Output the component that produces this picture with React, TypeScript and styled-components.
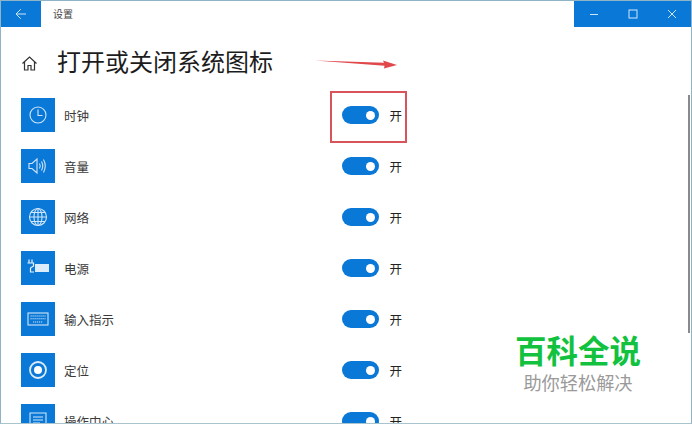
import React from "react";
import styled, { createGlobalStyle } from "styled-components";

const Global = createGlobalStyle`
  html, body { margin: 0; padding: 0; background: #fff; overflow: hidden; }
  #root { width: 692px; height: 424px; }
`;

const FONT = `"Noto Sans CJK SC", "Liberation Sans", sans-serif`;

const Win = styled.div`
  position: relative;
  width: 692px;
  height: 424px;
  box-sizing: border-box;
  border: 1px solid #8fb4c8;
  border-bottom: 1px solid #a9c4cf;
  background: #fff;
  overflow: hidden;
  font-family: ${FONT};
  color: #222;
`;
const TitleBar = styled.div`
  display: flex;
  align-items: stretch;
  height: 26px;
`;
const BackBtn = styled.div`
  width: 40px;
  background: #0a78d7;
  display: flex;
  align-items: center;
  justify-content: center;
`;
const TitleText = styled.div`
  margin-left: 12px;
  font-size: 10px;
  line-height: 26px;
  color: #444;
  flex: 1;
`;
const Controls = styled.div`
  display: flex;
  width: 117px;
  background: #0a78d7;
`;
const Ctl = styled.div`
  flex: 1;
  display: flex;
  align-items: center;
  justify-content: center;
`;
const Heading = styled.div`
  display: flex;
  align-items: center;
  height: 36px;
  margin-top: 16px;
  padding-left: 20px;
`;
const HomeWrap = styled.div`
  width: 17px;
  height: 17px;
  margin-right: 19px;
`;
const H1 = styled.h1`
  margin: 0;
  font-size: 24px;
  font-weight: 400;
  line-height: 36px;
  color: #1c1c1c;
`;
const List = styled.div`
  display: flex;
  flex-direction: column;
  gap: 17px;
  margin-top: 19px;
  padding-left: 20px;
`;
const Row = styled.div`
  display: flex;
  align-items: center;
  height: 34px;
  flex: none;
`;
const IconBox = styled.div`
  width: 34px;
  height: 34px;
  background: #0a78d7;
  display: flex;
  align-items: center;
  justify-content: center;
  flex: none;
`;
const Label = styled.div`
  width: 277.5px;
  margin-left: 9px;
  font-size: 12.5px;
  color: #3a3a3a;
  white-space: nowrap;
`;
const Toggle = styled.div`
  position: relative;
  width: 37.5px;
  height: 18px;
  border-radius: 9px;
  background: #0a78d7;
  flex: none;
`;
const Knob = styled.div`
  position: absolute;
  top: 4.5px;
  right: 4px;
  width: 9px;
  height: 9px;
  border-radius: 50%;
  background: #fff;
`;
const OnText = styled.div`
  margin-left: 10.5px;
  font-size: 12.5px;
  color: #222;
`;
const RedBox = styled.div`
  position: absolute;
  left: 329px;
  top: 90px;
  width: 73px;
  height: 48px;
  border: 2px solid #d9545a;
`;
const Arrow = styled.svg`
  position: absolute;
  left: 313px;
  top: 57px;
`;
const Scroll = styled.div`
  position: absolute;
  right: 1px;
  top: 94px;
  width: 2px;
  height: 238px;
  background: #8a8a8a;
`;
const Mark = styled.div`
  position: absolute;
  left: 508px;
  top: 327px;
  width: 138px;
  background: rgba(255, 255, 255, 0.9);
  display: flex;
  flex-direction: column;
  align-items: center;
`;
const MarkTop = styled.div`
  font-size: 31.5px;
  font-weight: 700;
  line-height: 43px;
  color: #12c23f;
  white-space: nowrap;
`;
const MarkSub = styled.div`
  font-size: 18.2px;
  line-height: 22px;
  color: #9a9a9a;
  white-space: nowrap;
`;

const I = { fill: "none", stroke: "#cfe6fa", strokeWidth: 1.1 } as const;

const Clock = () => (
  <svg width="20" height="20" viewBox="0 0 20 20" {...I}>
    <circle cx="10" cy="10" r="8" />
    <path d="M10 4.5V10.5H14.5" />
  </svg>
);
const Speaker = () => (
  <svg width="22" height="20" viewBox="0 0 22 20" {...I}>
    <path d="M2 7.5H5L10 3V17L5 12.5H2Z" />
    <path d="M12.5 7.5Q14 10 12.5 12.5M14.5 5.5Q17 10 14.5 14.5M16.5 3.5Q20 10 16.5 16.5" />
  </svg>
);
const Globe = () => (
  <svg width="20" height="20" viewBox="0 0 20 20" {...I}>
    <circle cx="10" cy="10" r="8.5" />
    <ellipse cx="10" cy="10" rx="4" ry="8.5" />
    <path d="M1.5 10H18.5M3 5.5H17M3 14.5H17M10 1.5V18.5" />
  </svg>
);
const Power = () => (
  <svg width="24" height="18" viewBox="0 0 24 18">
    <rect x="9" y="5" width="14" height="8" fill="#dcecfb" />
    <path d="M3 0.5V4M6 0.5V4M1.5 4H7.5V7L4.5 9V13H8" fill="none" stroke="#e6f2fd" strokeWidth="1.2" />
  </svg>
);
const Keyboard = () => (
  <svg width="22" height="14" viewBox="0 0 22 14" {...I}>
    <rect x="1" y="1" width="20" height="12" />
    <path d="M3.5 4H18.5M3.5 6.8H18.5M6 10H16" strokeDasharray="1.2 0.8" />
  </svg>
);
const Target = () => (
  <svg width="20" height="20" viewBox="0 0 20 20">
    <circle cx="10" cy="10" r="8" fill="none" stroke="#dcecfb" strokeWidth="1.8" />
    <circle cx="10" cy="10" r="4" fill="#fff" />
  </svg>
);
const Action = () => (
  <svg width="20" height="20" viewBox="0 0 20 20" {...I}>
    <path d="M2 2H18V15H2ZM5 6H15M5 9H15M5 12H12" />
  </svg>
);

const rows: [string, React.ReactNode][] = [
  ["时钟", <Clock />],
  ["音量", <Speaker />],
  ["网络", <Globe />],
  ["电源", <Power />],
  ["输入指示", <Keyboard />],
  ["定位", <Target />],
  ["操作中心", <Action />],
];

export default function App() {
  return (
    <Win>
      <Global />
      <TitleBar>
        <BackBtn>
          <svg width="12" height="12" viewBox="0 0 12 12" fill="none" stroke="#cfe6fa" strokeWidth="1">
            <path d="M11 6H1.2M5.8 1.2L1 6L5.8 10.8" />
          </svg>
        </BackBtn>
        <TitleText>设置</TitleText>
        <Controls>
          <Ctl>
            <svg width="10" height="10" viewBox="0 0 10 10" stroke="#cfe6fa" fill="none"><path d="M1 5.5H9" /></svg>
          </Ctl>
          <Ctl>
            <svg width="10" height="10" viewBox="0 0 10 10" stroke="#cfe6fa" fill="none"><rect x="1" y="1" width="8" height="8" /></svg>
          </Ctl>
          <Ctl>
            <svg width="10" height="10" viewBox="0 0 10 10" stroke="#cfe6fa" fill="none"><path d="M1 1L9 9M9 1L1 9" /></svg>
          </Ctl>
        </Controls>
      </TitleBar>
      <Heading>
        <HomeWrap>
          <svg width="17" height="17" viewBox="0 0 17 17" fill="none" stroke="#333" strokeWidth="1.2">
            <path d="M1.5 8.5L8.5 2L15.5 8.5M3.5 7V15H7V10.5H10V15H13.5V7" />
          </svg>
        </HomeWrap>
        <H1>打开或关闭系统图标</H1>
      </Heading>
      <List>
        {rows.map(([name, icon]) => (
          <Row key={name}>
            <IconBox>{icon}</IconBox>
            <Label>{name}</Label>
            <Toggle><Knob /></Toggle>
            <OnText>开</OnText>
          </Row>
        ))}
      </List>
      <Arrow width="86" height="16" viewBox="0 0 86 16">
        <path d="M1 2.5L70 4.8L69 2.5L83 7L70 10.5L70.5 7.8Z" fill="#e0484c" />
      </Arrow>
      <RedBox />
      <Scroll />
      <Mark>
        <MarkTop>百科全说</MarkTop>
        <MarkSub>助你轻松解决</MarkSub>
      </Mark>
    </Win>
  );
}
